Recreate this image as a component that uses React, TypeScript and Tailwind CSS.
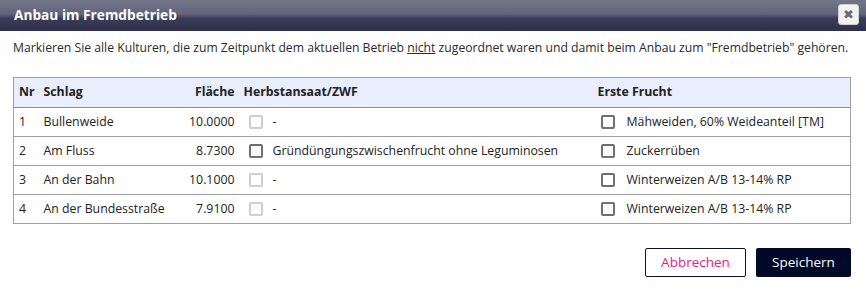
import React from "react";

const rows = [
  { nr: 1, schlag: "Bullenweide", flaeche: "10.0000", zwf: "-", zwfEnabled: false, frucht: "Mähweiden, 60% Weideanteil [TM]" },
  { nr: 2, schlag: "Am Fluss", flaeche: "8.7300", zwf: "Gründüngungszwischenfrucht ohne Leguminosen", zwfEnabled: true, frucht: "Zuckerrüben" },
  { nr: 3, schlag: "An der Bahn", flaeche: "10.1000", zwf: "-", zwfEnabled: false, frucht: "Winterweizen A/B 13-14% RP" },
  { nr: 4, schlag: "An der Bundesstraße", flaeche: "7.9100", zwf: "-", zwfEnabled: false, frucht: "Winterweizen A/B 13-14% RP" },
];

function Box({ enabled }: { enabled: boolean }) {
  return (
    <span
      className={`inline-block w-[14px] h-[14px] rounded-[2px] border-2 bg-white shrink-0 ${
        enabled ? "border-[#6f6f76]" : "border-[#cfcfd2]"
      }`}
    />
  );
}

export default function App() {
  return (
    <div className="w-[866px] h-[295px] bg-white font-['Open_Sans',sans-serif] text-[#222] overflow-hidden">
      <div className="relative h-[31px] bg-[linear-gradient(to_bottom,#737589_0%,#62647a_45%,#3a3c58_60%,#2d2f4b_100%)] flex items-center px-[14px]">
        <span className="text-white font-bold text-[13.7px]">Anbau im Fremdbetrieb</span>
        <button className="absolute right-[7px] top-[4px] w-[21px] h-[21px] rounded-[3px] bg-[#f2f2f2] border border-[#d0d0d0] flex items-center justify-center text-[#6a6a6a] text-[13px] leading-none">
          ✖
        </button>
      </div>

      <p className="mt-[8px] px-[13px] text-[12.2px] leading-[18px] text-[#2a2a2a] whitespace-nowrap">
        Markieren Sie alle Kulturen, die zum Zeitpunkt dem aktuellen Betrieb <span className="underline">nicht</span> zugeordnet waren und damit beim Anbau zum "Fremdbetrieb" gehören.
      </p>

      <table className="mt-[20px] ml-[13px] w-[838px] border border-[#a0a0a0] border-collapse text-[12.3px]">
        <thead>
          <tr className="bg-[#e8eefb] h-[30px] border-b border-[#8f8f8f]">
            <th className="text-left font-bold pl-[5px] w-[26px]">Nr</th>
            <th className="text-left font-bold pl-[4px] w-[140px]">Schlag</th>
            <th className="text-right font-bold pr-[7px] w-[62px]">Fläche</th>
            <th className="text-left font-bold pl-[2px] w-[355px]">Herbstansaat/ZWF</th>
            <th className="text-left font-bold pl-[1px]">Erste Frucht</th>
          </tr>
        </thead>
        <tbody>
          {rows.map((r) => (
            <tr key={r.nr} className="h-[29px] border-b border-[#a0a0a0]">
              <td className="pl-[5px]">{r.nr}</td>
              <td className="pl-[4px]">{r.schlag}</td>
              <td className="text-right pr-[7px]">{r.flaeche}</td>
              <td className="pl-[7px]">
                <div className="flex items-center gap-[10px]">
                  <Box enabled={r.zwfEnabled} />
                  <span>{r.zwf}</span>
                </div>
              </td>
              <td className="pl-[4px]">
                <div className="flex items-center gap-[12px]">
                  <Box enabled />
                  <span>{r.frucht}</span>
                </div>
              </td>
            </tr>
          ))}
        </tbody>
      </table>

      <div className="flex justify-end gap-[10px] mt-[24px] pr-[15px]">
        <button className="w-[101px] h-[29px] border border-[#0b0f33] rounded-[2px] text-[#e8198b] text-[13.5px] bg-white">
          Abbrechen
        </button>
        <button className="w-[95px] h-[29px] rounded-[2px] bg-[#020828] text-white text-[13.5px]">
          Speichern
        </button>
      </div>
    </div>
  );
}
